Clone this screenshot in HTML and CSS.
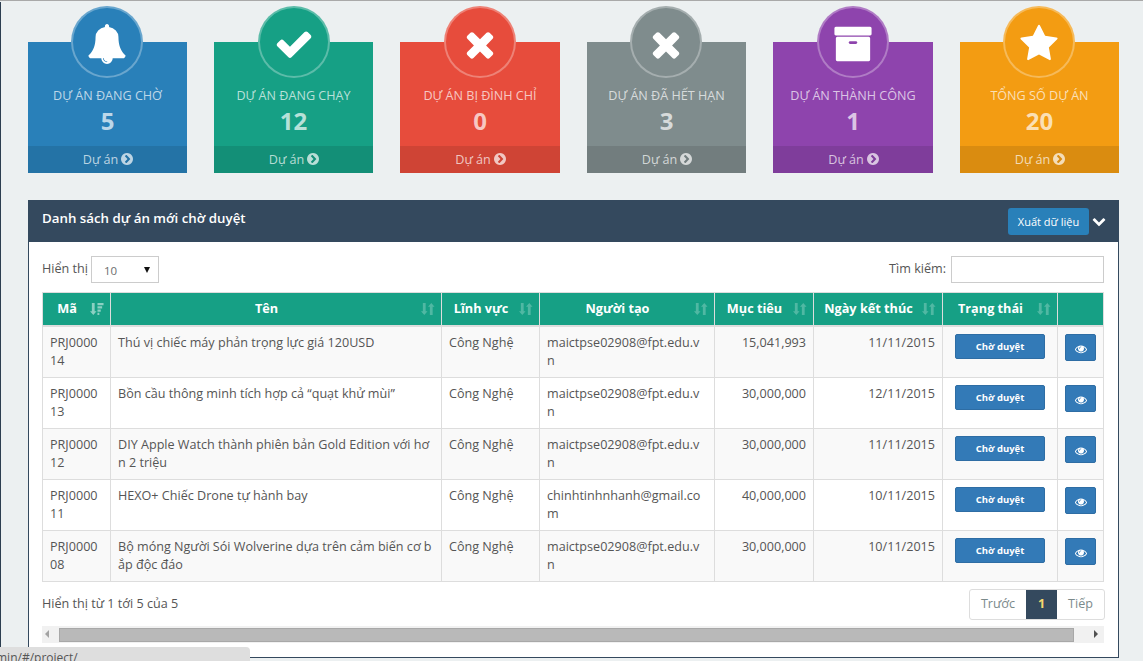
FILE: index.html
```html
<!DOCTYPE html>
<html lang="vi">
<head>
<meta charset="utf-8">
<title>Dự án</title>
<link rel="stylesheet" href="styles.css">
</head>
<body>
<svg class="sprite" xmlns="http://www.w3.org/2000/svg">
  <symbol id="i-check" viewBox="0 0 1792 1792"><path d="M1671 566q0 40-28 68l-724 724-136 136q-28 28-68 28t-68-28l-136-136-362-362q-28-28-28-68t28-68l136-136q28-28 68-28t68 28l294 295 656-657q28-28 68-28t68 28l136 136q28 28 28 68z"/></symbol>
  <symbol id="i-times" viewBox="0 0 1792 1792"><path d="M1490 1322q0 40-28 68l-136 136q-28 28-68 28t-68-28l-294-294-294 294q-28 28-68 28t-68-28l-136-136q-28-28-28-68t28-68l294-294-294-294q-28-28-28-68t28-68l136-136q28-28 68-28t68 28l294 294 294-294q28-28 68-28t68 28l136 136q28 28 28 68t-28 68l-294 294 294 294q28 28 28 68z"/></symbol>
  <symbol id="i-bell" viewBox="0 0 1792 1792"><path d="M912 1696q0-16-16-16-59 0-101.500-42.500t-42.500-101.500q0-16-16-16t-16 16q0 73 51.500 124.500t124.500 51.500q16 0 16-16zm816-288q0 52-38 90t-90 38h-448q0 106-75 181t-181 75-181-75-75-181h-448q-52 0-90-38t-38-90q50-42 91-88t85-119.500 74.500-158.500 50-206 19.500-260q0-152 117-282.500t307-158.500q-8-19-8-39 0-40 28-68t68-28 68 28 28 68q0 20-8 39 190 28 307 158.500t117 282.500q0 139 19.500 260t50 206 74.500 158.500 85 119.500 91 88z"/></symbol>
  <symbol id="i-star" viewBox="0 0 1792 1792"><path d="M1728 647q0 22-26 48l-363 354 86 500q1 7 1 20 0 21-10.500 35.500t-30.500 14.500q-19 0-40-12l-449-236-449 236q-22 12-40 12-21 0-31.500-14.500t-10.500-35.500q0-6 2-20l86-500-364-354q-25-27-25-48 0-37 56-46l502-73 225-455q19-41 49-41t49 41l225 455 502 73q56 9 56 46z"/></symbol>
  <symbol id="i-archive" viewBox="0 0 1792 1792"><path d="M1088 832q0-26-19-45t-45-19h-256q-26 0-45 19t-19 45 19 45 45 19h256q26 0 45-19t19-45zm576-192v960q0 26-19 45t-45 19h-1408q-26 0-45-19t-19-45v-960q0-26 19-45t45-19h1408q26 0 45 19t19 45zm64-448v256q0 26-19 45t-45 19h-1536q-26 0-45-19t-19-45v-256q0-26 19-45t45-19h1536q26 0 45 19t19 45z"/></symbol>
  <symbol id="i-eye" viewBox="0 0 1792 1792"><path d="M1664 960q-152-236-381-353 61 104 61 225 0 185-131.500 316.500t-316.500 131.500-316.500-131.500-131.500-316.500q0-121 61-225-229 117-381 353 133 205 333.500 326.500t434.500 121.500 434.500-121.500 333.500-326.500zm-720-384q0-20-14-34t-34-14q-125 0-214.500 89.500t-89.500 214.500q0 20 14 34t34 14 34-14 14-34q0-86 61-147t147-61q20 0 34-14t14-34zm848 384q0 34-20 69-140 230-376.500 368.500t-499.500 138.500-499.500-139-376.500-368q-20-35-20-69t20-69q140-229 376.500-368t499.500-139 499.500 139 376.500 368q20 35 20 69z"/></symbol>
  <symbol id="i-circle-right" viewBox="0 0 1792 1792"><path d="M845 1395l454-454q19-19 19-45t-19-45l-454-454q-19-19-45-19t-45 19l-102 102q-19 19-19 45t19 45l307 307-307 307q-19 19-19 45t19 45l102 102q19 19 45 19t45-19zm819-499q0 209-103 385.500t-279.500 279.500-385.500 103-385.500-103-279.500-279.500-103-385.500 103-385.500 279.500-279.500 385.500-103 385.500 103 279.500 279.500 103 385.500z"/></symbol>
  <symbol id="i-chevron" viewBox="0 0 1792 1792"><path d="M1683 808l-742 741q-19 19-45 19t-45-19l-742-741q-19-19-19-45.500t19-45.500l166-165q19-19 45-19t45 19l531 531 531-531q19-19 45-19t45 19l166 165q19 19 19 45.500t-19 45.500z"/></symbol>
  <symbol id="i-sort" viewBox="0 0 15 14"><path d="M2 .5h3v9h2L3.500 13.500 0 9.500h2zM9.500 13.500h3v-9h2L11 .5 7.500 4.500h2z"/></symbol>
  <symbol id="i-sorted" viewBox="0 0 15 14"><path d="M2 .5h3v9h2L3.500 13.500 0 9.500h2zM8 .5h6.500v2.500H8zM8 4h5v2.500H8zM8 7.500h3.500V10H8zM8 11h2v2.500H8z"/></symbol>
</svg>

<main class="page">
  <section class="stats">
    <article class="stat stat-blue">
      <div class="stat-badge"><svg class="badge-icon"><use href="#i-bell"/></svg></div>
      <h3 class="stat-title">Dự án đang chờ</h3>
      <div class="stat-value">5</div>
      <a class="stat-foot">Dự án <svg class="foot-icon"><use href="#i-circle-right"/></svg></a>
    </article>
    <article class="stat stat-green">
      <div class="stat-badge"><svg class="badge-icon"><use href="#i-check"/></svg></div>
      <h3 class="stat-title">Dự án đang chạy</h3>
      <div class="stat-value">12</div>
      <a class="stat-foot">Dự án <svg class="foot-icon"><use href="#i-circle-right"/></svg></a>
    </article>
    <article class="stat stat-red">
      <div class="stat-badge"><svg class="badge-icon"><use href="#i-times"/></svg></div>
      <h3 class="stat-title">Dự án bị đình chỉ</h3>
      <div class="stat-value">0</div>
      <a class="stat-foot">Dự án <svg class="foot-icon"><use href="#i-circle-right"/></svg></a>
    </article>
    <article class="stat stat-gray">
      <div class="stat-badge"><svg class="badge-icon"><use href="#i-times"/></svg></div>
      <h3 class="stat-title">Dự án đã hết hạn</h3>
      <div class="stat-value">3</div>
      <a class="stat-foot">Dự án <svg class="foot-icon"><use href="#i-circle-right"/></svg></a>
    </article>
    <article class="stat stat-purple">
      <div class="stat-badge"><svg class="badge-icon"><use href="#i-archive"/></svg></div>
      <h3 class="stat-title">Dự án thành công</h3>
      <div class="stat-value">1</div>
      <a class="stat-foot">Dự án <svg class="foot-icon"><use href="#i-circle-right"/></svg></a>
    </article>
    <article class="stat stat-orange">
      <div class="stat-badge"><svg class="badge-icon"><use href="#i-star"/></svg></div>
      <h3 class="stat-title">Tổng số dự án</h3>
      <div class="stat-value">20</div>
      <a class="stat-foot">Dự án <svg class="foot-icon"><use href="#i-circle-right"/></svg></a>
    </article>
  </section>

  <section class="panel">
    <header class="panel-head">
      <h2 class="panel-title">Danh sách dự án mới chờ duyệt</h2>
      <div class="panel-tools">
        <button class="btn-export">Xuất dữ liệu</button>
        <svg class="collapse-icon"><use href="#i-chevron"/></svg>
      </div>
    </header>
    <div class="panel-body">
      <div class="filters">
        <div class="filter-length">Hiển thị <span class="fake-select">10</span></div>
        <label class="filter-search">Tìm kiếm: <input class="search-input" type="text"></label>
      </div>
      <table class="data">
        <colgroup>
          <col class="c-id"><col class="c-name"><col class="c-field"><col class="c-user"><col class="c-goal"><col class="c-date"><col class="c-status"><col class="c-act">
        </colgroup>
        <thead>
          <tr>
            <th>Mã<svg class="sort-icon sorted"><use href="#i-sorted"/></svg></th>
            <th>Tên<svg class="sort-icon"><use href="#i-sort"/></svg></th>
            <th>Lĩnh vực<svg class="sort-icon"><use href="#i-sort"/></svg></th>
            <th>Người tạo<svg class="sort-icon"><use href="#i-sort"/></svg></th>
            <th>Mục tiêu<svg class="sort-icon"><use href="#i-sort"/></svg></th>
            <th>Ngày kết thúc<svg class="sort-icon"><use href="#i-sort"/></svg></th>
            <th>Trạng thái<svg class="sort-icon"><use href="#i-sort"/></svg></th>
            <th></th>
          </tr>
        </thead>
        <tbody>
          <tr>
            <td>PRJ000014</td>
            <td>Thú vị chiếc máy phản trọng lực giá 120USD</td>
            <td>Công Nghệ</td>
            <td class="user">maictpse02908@fpt.edu.vn</td>
            <td class="num">15,041,993</td>
            <td class="num">11/11/2015</td>
            <td class="center"><button class="btn-status">Chờ duyệt</button></td>
            <td class="center"><button class="btn-view"><svg class="eye"><use href="#i-eye"/></svg></button></td>
          </tr>
          <tr>
            <td>PRJ000013</td>
            <td>Bồn cầu thông minh tích hợp cả “quạt khử mùi”</td>
            <td>Công Nghệ</td>
            <td class="user">maictpse02908@fpt.edu.vn</td>
            <td class="num">30,000,000</td>
            <td class="num">12/11/2015</td>
            <td class="center"><button class="btn-status">Chờ duyệt</button></td>
            <td class="center"><button class="btn-view"><svg class="eye"><use href="#i-eye"/></svg></button></td>
          </tr>
          <tr>
            <td>PRJ000012</td>
            <td>DIY Apple Watch thành phiên bản Gold Edition với hơn 2 triệu</td>
            <td>Công Nghệ</td>
            <td class="user">maictpse02908@fpt.edu.vn</td>
            <td class="num">30,000,000</td>
            <td class="num">11/11/2015</td>
            <td class="center"><button class="btn-status">Chờ duyệt</button></td>
            <td class="center"><button class="btn-view"><svg class="eye"><use href="#i-eye"/></svg></button></td>
          </tr>
          <tr>
            <td>PRJ000011</td>
            <td>HEXO+ Chiếc Drone tự hành bay</td>
            <td>Công Nghệ</td>
            <td class="user">chinhtinhnhanh@gmail.com</td>
            <td class="num">40,000,000</td>
            <td class="num">10/11/2015</td>
            <td class="center"><button class="btn-status">Chờ duyệt</button></td>
            <td class="center"><button class="btn-view"><svg class="eye"><use href="#i-eye"/></svg></button></td>
          </tr>
          <tr>
            <td>PRJ000008</td>
            <td>Bộ móng Người Sói Wolverine dựa trên cảm biến cơ bắp độc đáo</td>
            <td>Công Nghệ</td>
            <td class="user">maictpse02908@fpt.edu.vn</td>
            <td class="num">30,000,000</td>
            <td class="num">10/11/2015</td>
            <td class="center"><button class="btn-status">Chờ duyệt</button></td>
            <td class="center"><button class="btn-view"><svg class="eye"><use href="#i-eye"/></svg></button></td>
          </tr>
        </tbody>
      </table>
      <div class="table-foot">
        <div class="info">Hiển thị từ 1 tới 5 của 5</div>
        <nav class="pager">
          <a class="pager-item">Trước</a>
          <a class="pager-item active">1</a>
          <a class="pager-item">Tiếp</a>
        </nav>
      </div>
      <div class="hscroll">
        <span class="arrow arrow-left"></span>
        <span class="thumb"></span>
        <span class="arrow arrow-right"></span>
      </div>
    </div>
  </section>
</main>
<div class="status-bubble">min/#/project/</div>
</body>
</html>
```
FILE: styles.css
```css
* { box-sizing: border-box; }
html, body { height: 100%; }
body {
  margin: 0;
  overflow: hidden;
  background: #ecf0f1;
  color: #555;
  font: 12.6px/18px "Open Sans", "Noto Sans", sans-serif;
  border-top: 1px solid #a9a9a9;
}
.sprite { display: none; }
.page {
  height: 659px;
  margin-top: 1px;
  padding: 40px 24px 0 27px;
  border-left: 1px solid #2c3e50;
}
.stats {
  display: grid;
  grid-template-columns: 159px 159px 160px 159px 160px 159px;
  column-gap: 27px;
}
.stat {
  position: relative;
  height: 131px;
  padding-top: 45px;
  text-align: center;
  color: rgba(255, 255, 255, .7);
}
.stat-blue { background: #2980b9; }
.stat-green { background: #16a085; }
.stat-red { background: #e74c3c; }
.stat-gray { background: #7f8c8d; }
.stat-purple { background: #8e44ad; }
.stat-orange { background: #f39c12; }
.stat-badge {
  position: absolute;
  top: -36px;
  left: 50%;
  width: 72px;
  height: 72px;
  margin-left: -36.3px;
  display: flex;
  align-items: center;
  justify-content: center;
  border-radius: 50%;
  border: 2px solid rgba(255, 255, 255, .3);
}
.stat-blue .stat-badge { background-color: #2980b9; }
.stat-green .stat-badge { background-color: #16a085; margin-left: -36px; }
.stat-red .stat-badge { background-color: #e74c3c; }
.stat-gray .stat-badge { background-color: #7f8c8d; }
.stat-purple .stat-badge { background-color: #8e44ad; }
.stat-orange .stat-badge { background-color: #f39c12; }
.badge-icon { width: 40px; height: 40px; margin-top: 3px; fill: #fff; }
.stat-title {
  margin: 0;
  font-size: 12.6px;
  font-weight: 400;
  line-height: 18px;
  text-transform: uppercase;
}
.stat-value {
  margin-top: 2px;
  font-size: 24px;
  font-weight: 700;
  line-height: 28px;
}
.stat-foot {
  position: absolute;
  left: 0;
  right: 0;
  bottom: 0;
  height: 27px;
  padding-left: 2px;
  display: flex;
  align-items: center;
  justify-content: center;
  gap: 2px;
  background: rgba(0, 0, 0, .1);
  font-size: 12.6px;
}
.foot-icon { width: 14px; height: 14px; fill: currentColor; margin-top: -2px; }
.panel {
  margin-top: 27px;
  height: 458px;
  border: 1px solid #34495e;
  border-top: 0;
  background: #fff;
}
.panel-head {
  height: 42px;
  margin: 0 -1px;
  display: flex;
  justify-content: space-between;
  padding: 8px 13px 0 14px;
  background: #34495e;
  color: #fff;
}
.panel-title { margin: 0; font-size: 13.3px; font-weight: 600; line-height: 20px; }
.panel-tools { display: flex; align-items: flex-start; gap: 3px; }
.btn-export {
  width: 81px;
  height: 27px;
  padding: 0;
  border: 0;
  border-radius: 3px;
  background: #2980b9;
  color: #fff;
  font: 11px "Open Sans", sans-serif;
}
.collapse-icon { width: 14px; height: 14px; margin-top: 6px; fill: #fff; }
.panel-body { padding: 14px 14px 0 13px; }
.filters {
  display: flex;
  justify-content: space-between;
  align-items: flex-start;
  height: 27px;
  margin-bottom: 9px;
}
.filter-length, .filter-search { display: flex; align-items: flex-start; line-height: 26px; }
.filter-length { gap: 3px; }
.filter-search { gap: 5px; }
.fake-select {
  position: relative;
  width: 68px;
  height: 27px;
  padding: 1px 0 0 12px;
  border: 1px solid #ccc;
  font-size: 11.5px;
  color: #6d6d6d;
}
.fake-select::after {
  content: "";
  position: absolute;
  right: 8px;
  top: 10px;
  border: 3.5px solid transparent;
  border-top: 6px solid #111;
  border-bottom: 0;
}
.search-input { width: 153px; height: 27px; border: 1px solid #ccc; padding: 0 6px; outline: 0; background: #fff; }
.data {
  width: 1061px;
  table-layout: fixed;
  border-collapse: collapse;
}
.c-id { width: 68px; }
.c-name { width: 331px; }
.c-field { width: 98px; }
.c-user { width: 175px; }
.c-goal { width: 99px; }
.c-date { width: 129px; }
.c-status { width: 115px; }
.c-act { width: 46px; }
.data th {
  position: relative;
  height: 33px;
  padding: 0 26px 2px 7px;
  border: 1px solid #ddd;
  border-bottom: 2px solid #ddd;
  background: #16a085;
  color: #fff;
  font-size: 12.7px;
  font-weight: 700;
  text-align: center;
  border-left-color: #fff;
}
.data th:first-child { border-left-color: #ddd; }
.sort-icon {
  position: absolute;
  right: 6px;
  top: 9px;
  width: 14px;
  height: 14px;
  fill: rgba(255, 255, 255, .25);
}
.sort-icon.sorted { fill: rgba(255, 255, 255, .5); }
.data td {
  height: 51px;
  padding: 7px 7px 0;
  border: 1px solid #ddd;
  vertical-align: top;
  word-break: break-all;
}
.data tbody tr:first-child td { height: 52px; }
.data tbody tr:nth-child(odd) { background: #f9f9f9; }
.data td.user { padding-right: 10px; }
.data td.num { text-align: right; }
.data td.center { text-align: center; }
.btn-status {
  display: block;
  width: 90px;
  height: 25px;
  margin: 0 auto;
  padding: 0;
  border: 1px solid #2e6da4;
  border-radius: 2px;
  background: #337ab7;
  color: #fff;
  font: 700 9.5px "Open Sans", sans-serif;
}
.btn-view {
  display: block;
  width: 31px;
  height: 27px;
  margin: 0 auto;
  padding: 6px 0 0;
  border: 1px solid #2e6da4;
  border-radius: 2px;
  background: #337ab7;
}
.eye { width: 12px; height: 12px; fill: #fff; }
.table-foot {
  display: flex;
  justify-content: space-between;
  align-items: flex-start;
  margin-right: -1px;
  padding-top: 7px;
  height: 44px;
}
.info { padding-top: 6px; }
.pager {
  display: flex;
  height: 31px;
  border: 1px solid #ddd;
  border-radius: 3px;
  overflow: hidden;
  color: #7b8a8b;
}
.pager-item { display: flex; align-items: center; justify-content: center; width: 56px; padding-bottom: 2px; }
.pager-item.active { width: 31px; background: #34495e; color: #f5d76e; font-weight: 700; }
.pager-item:last-child { width: 47px; }
.hscroll {
  display: flex;
  align-items: center;
  width: 1062px;
  height: 17px;
  background: #f1f1f1;
}
.arrow { flex: none; width: 17px; height: 17px; position: relative; }
.arrow::before {
  content: "";
  position: absolute;
  top: 4px;
  border: 4px solid transparent;
}
.arrow-left::before { left: 3px; border-right: 4px solid #a3a3a3; border-left: 0; }
.arrow-right { width: 30px; }
.arrow-right::before { left: 20px; border-left: 4px solid #505050; border-right: 0; }
.thumb { flex: 1; height: 14px; background: #b9b9b9; border: 1px solid #a8a8a8; }
.status-bubble {
  position: fixed;
  left: 0;
  bottom: 0;
  width: 250px;
  height: 14px;
  overflow: hidden;
  text-indent: -4px;
  background: #dedede;
  border-top-right-radius: 4px;
  color: #555;
  font: 12px/21px "Open Sans", sans-serif;
}
```
